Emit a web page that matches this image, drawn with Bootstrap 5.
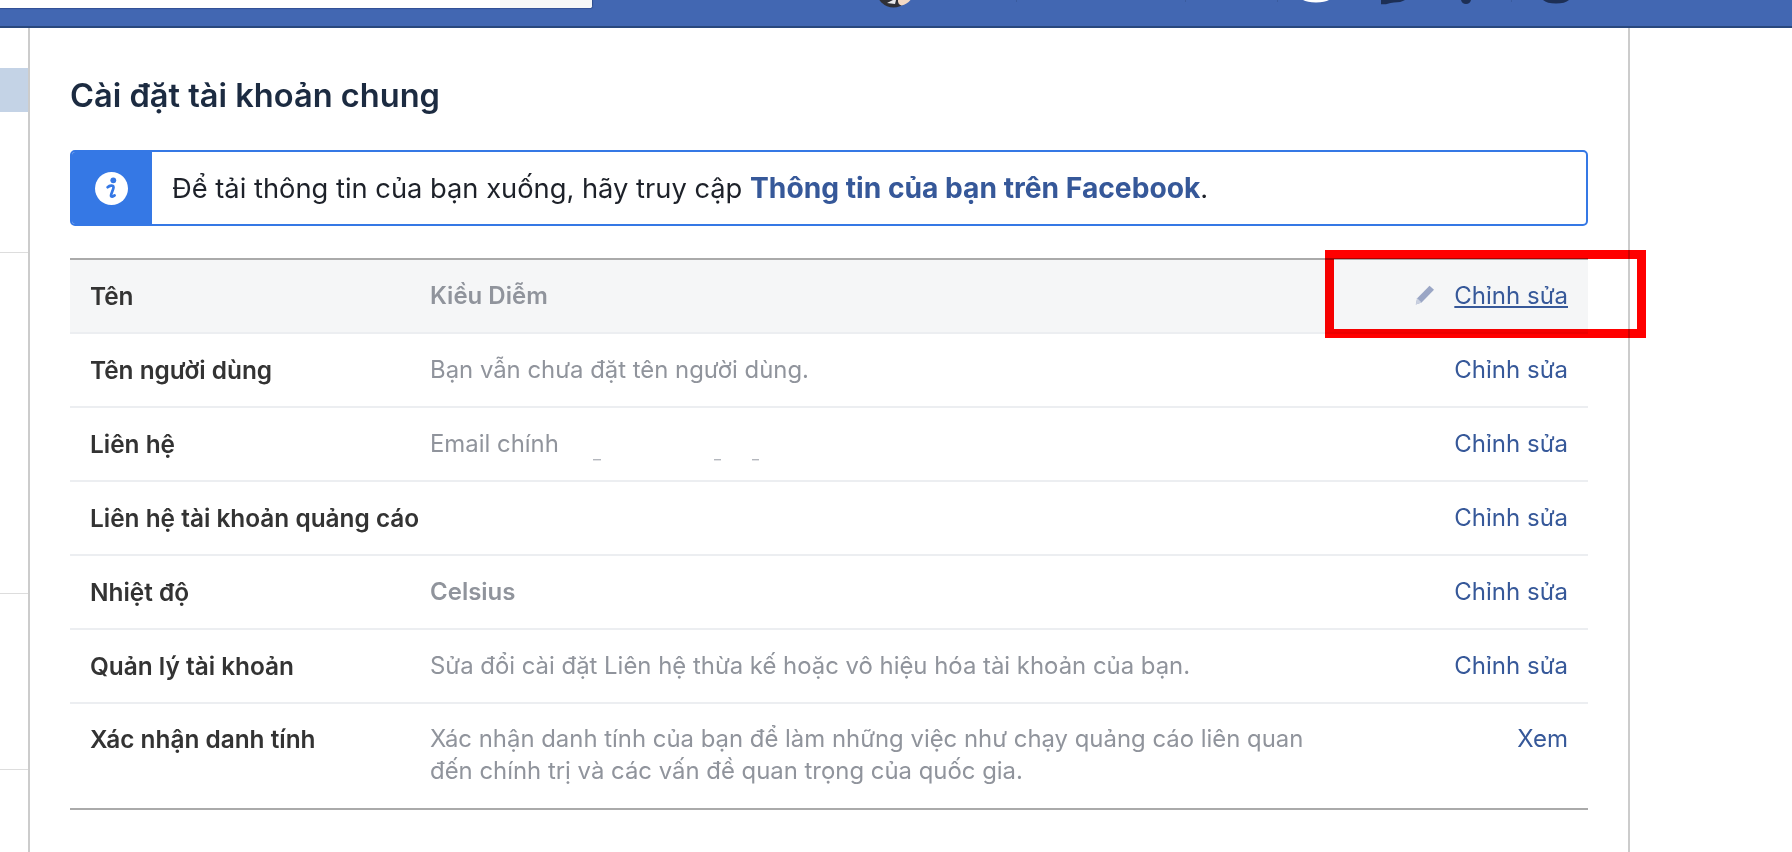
<!doctype html>
<html lang="vi">
<head>
<meta charset="utf-8">
<title>Cài đặt tài khoản chung</title>
<link href="https://cdn.jsdelivr.net/npm/bootstrap@5.3.0/dist/css/bootstrap.min.css" rel="stylesheet">
<style>
html,body{height:100%;overflow:hidden;background:#fff}
body{font-family:Inter,"Noto Sans",sans-serif;color:#1d2129}
.fb-top{height:28px;background:#4267b2;border-bottom:2px solid #29487d;overflow:hidden}
.fb-search{width:593px;height:8px;background:#fff;border-right:1px solid #2f4f8f;border-radius:0 0 3px 0;box-shadow:0 1px 1px rgba(30,50,110,.45);overflow:hidden}
.fb-search-btn{width:92px;background:#f5f6f7}
.fb-strip{margin-left:267px;display:block}
.fb-shell{height:824px}
.fb-side{width:30px;border-right:2px solid #ccc}
.fb-side-sel{height:44px;margin-top:40px;background:#c4d3e6}
.fb-side-rule{height:1px;background:#ddd}
.fb-rule-a{margin-top:140px}.fb-rule-b{margin-top:340px}.fb-rule-c{margin-top:175px}
.fb-main{width:1600px;border-right:2px solid #ccc;padding:0 40px}
.fb-title{font-size:32.6px;font-weight:600;line-height:36px;margin:49px 0 37px;color:#1c2b41}
.fb-info{height:76px;border:2px solid #3578e5;border-radius:5px;overflow:hidden}
.fb-info-ico{width:82px;margin:-2px 0 -2px -2px;background:#3578e5}
.fb-info-txt{font-size:27.3px;padding-left:20px;color:#1d2129}
.fb-info-txt a{font-size:28.2px;font-weight:700;color:#365899;text-decoration:none}
.fb-rows{width:1518px;margin-top:32px;border-top:2px solid #aaa;border-bottom:2px solid #aaa}
.fb-row{min-height:74px;padding:0 20px;border-bottom:2px solid #eceef1;font-size:24px;line-height:32px;align-items:center}
.fb-row:last-child{border-bottom:0;min-height:104px;align-items:flex-start;padding-top:19px}
.fb-row-on{background:#f5f6f7}
.fb-lab{width:340px;flex:none;font-size:24.4px;font-weight:600;color:#333;white-space:nowrap}
.fb-val{width:880px;flex:none;font-size:23.9px;color:#90949c}
.fb-val-b{font-weight:600;font-size:24px}
.fb-act{margin-left:auto;white-space:nowrap;color:#365899;text-decoration:none}
.fb-row-on .fb-act{text-decoration:underline}
.fb-pen{margin-right:19px;vertical-align:-1px}
.fb-dash{margin-left:34px;vertical-align:-9px}
.fb-mark{position:absolute;left:1325px;top:250px;width:321px;height:88px;border:9px solid #f00;mix-blend-mode:multiply;pointer-events:none}
</style>
</head>
<body>
<header class="fb-top d-flex align-items-start">
  <div class="fb-search d-flex justify-content-end"><div class="fb-search-btn"></div></div>
  <svg class="fb-strip" width="740" height="26" viewBox="860 0 740 26" aria-hidden="true">
    <circle cx="893.5" cy="-9.5" r="17" fill="#2f3036"/><path d="M898 0h12.5a17 17 0 0 1-9 5.6q-4-1.6-3.500-5.600z" fill="#f3d9c4"/><path d="M887 3l6-3h3l-1 4z" fill="#e8e8ea"/>
    <rect x="1016" y="0" width="1" height="2" fill="#3a5c9f"/><rect x="1185" y="0" width="1" height="2" fill="#3a5c9f"/><rect x="1277" y="0" width="1" height="2" fill="#3a5c9f"/><rect x="1511" y="0" width="1" height="2" fill="#3a5c9f"/>
    <path d="M1303 0h26q-4 2.400-13 2.400t-13-2.400z" fill="#fff"/>
    <path d="M1381 0h24q-4 2.500-11 2.500-3 0-8 1.700h-5z" fill="#1d2f55"/>
    <path d="M1461 0h10q-1 4-5 4t-5-4z" fill="#1d2f55"/>
    <path d="M1543 0h26q-4 3.500-13 3.500t-13-3.500z" fill="#1d2f55"/>
  </svg>
</header>
<div class="fb-shell d-flex">
  <aside class="fb-side flex-none">
    <div class="fb-side-sel"></div>
    <div class="fb-side-rule fb-rule-a"></div>
    <div class="fb-side-rule fb-rule-b"></div>
    <div class="fb-side-rule fb-rule-c"></div>
  </aside>
  <main class="fb-main">
    <h1 class="fb-title">Cài đặt tài khoản chung</h1>
    <div class="fb-info d-flex align-items-stretch">
      <div class="fb-info-ico d-flex align-items-center justify-content-center">
        <svg width="33" height="33" viewBox="0 0 33 33" aria-hidden="true"><circle cx="16.5" cy="16.5" r="16.5" fill="#fff"/><circle cx="18.3" cy="8.3" r="2.9" fill="#3578e5"/><path d="M12.6 15.2c1.8-1.6 5.9-2.8 5.9 .2 0 2.2-2.5 6.1-2.5 8.3 0 1.600 1.900 1.100 3.600-.3" fill="none" stroke="#3578e5" stroke-width="2.7" stroke-linecap="round"/></svg>
      </div>
      <div class="fb-info-txt d-flex align-items-center"><span>Để tải thông tin của bạn xuống, hãy truy cập <a href="#">Thông tin của bạn trên Facebook</a>.</span></div>
    </div>
    <div class="fb-rows">
      <div class="fb-row fb-row-on d-flex"><div class="fb-lab">Tên</div><div class="fb-val fb-val-b">Kiều Diễm</div><a class="fb-act" href="#"><svg class="fb-pen" width="20" height="20" viewBox="0 0 20 20" aria-hidden="true"><path d="M14.5 0.8 19 4.8 6.600 17.600 .8 19.600 2.200 13.200z" fill="#9aa6c5"/><path d="M.8 19.600 2.200 13.200 6.600 17.600z" fill="#c9d0e0"/></svg>Chỉnh sửa</a></div>
      <div class="fb-row d-flex"><div class="fb-lab">Tên người dùng</div><div class="fb-val">Bạn vẫn chưa đặt tên người dùng.</div><a class="fb-act" href="#">Chỉnh sửa</a></div>
      <div class="fb-row d-flex"><div class="fb-lab">Liên hệ</div><div class="fb-val">Email chính<svg class="fb-dash" width="170" height="2" viewBox="0 0 170 2" aria-hidden="true"><rect x="0" width="8" height="1.4" fill="#b4b7bd"/><rect x="121" width="7" height="1.4" fill="#b4b7bd"/><rect x="159" width="7" height="1.4" fill="#b4b7bd"/></svg></div><a class="fb-act" href="#">Chỉnh sửa</a></div>
      <div class="fb-row d-flex"><div class="fb-lab">Liên hệ tài khoản quảng cáo</div><div class="fb-val"></div><a class="fb-act" href="#">Chỉnh sửa</a></div>
      <div class="fb-row d-flex"><div class="fb-lab">Nhiệt độ</div><div class="fb-val fb-val-b">Celsius</div><a class="fb-act" href="#">Chỉnh sửa</a></div>
      <div class="fb-row d-flex"><div class="fb-lab">Quản lý tài khoản</div><div class="fb-val">Sửa đổi cài đặt Liên hệ thừa kế hoặc vô hiệu hóa tài khoản của bạn.</div><a class="fb-act" href="#">Chỉnh sửa</a></div>
      <div class="fb-row d-flex"><div class="fb-lab">Xác nhận danh tính</div><div class="fb-val">Xác nhận danh tính của bạn để làm những việc như chạy quảng cáo liên quan<br>đến chính trị và các vấn đề quan trọng của quốc gia.</div><a class="fb-act" href="#">Xem</a></div>
    </div>
  </main>
</div>
<div class="fb-mark"></div>
<script src="https://cdn.jsdelivr.net/npm/bootstrap@5.3.0/dist/js/bootstrap.bundle.min.js"></script>
</body>
</html>
